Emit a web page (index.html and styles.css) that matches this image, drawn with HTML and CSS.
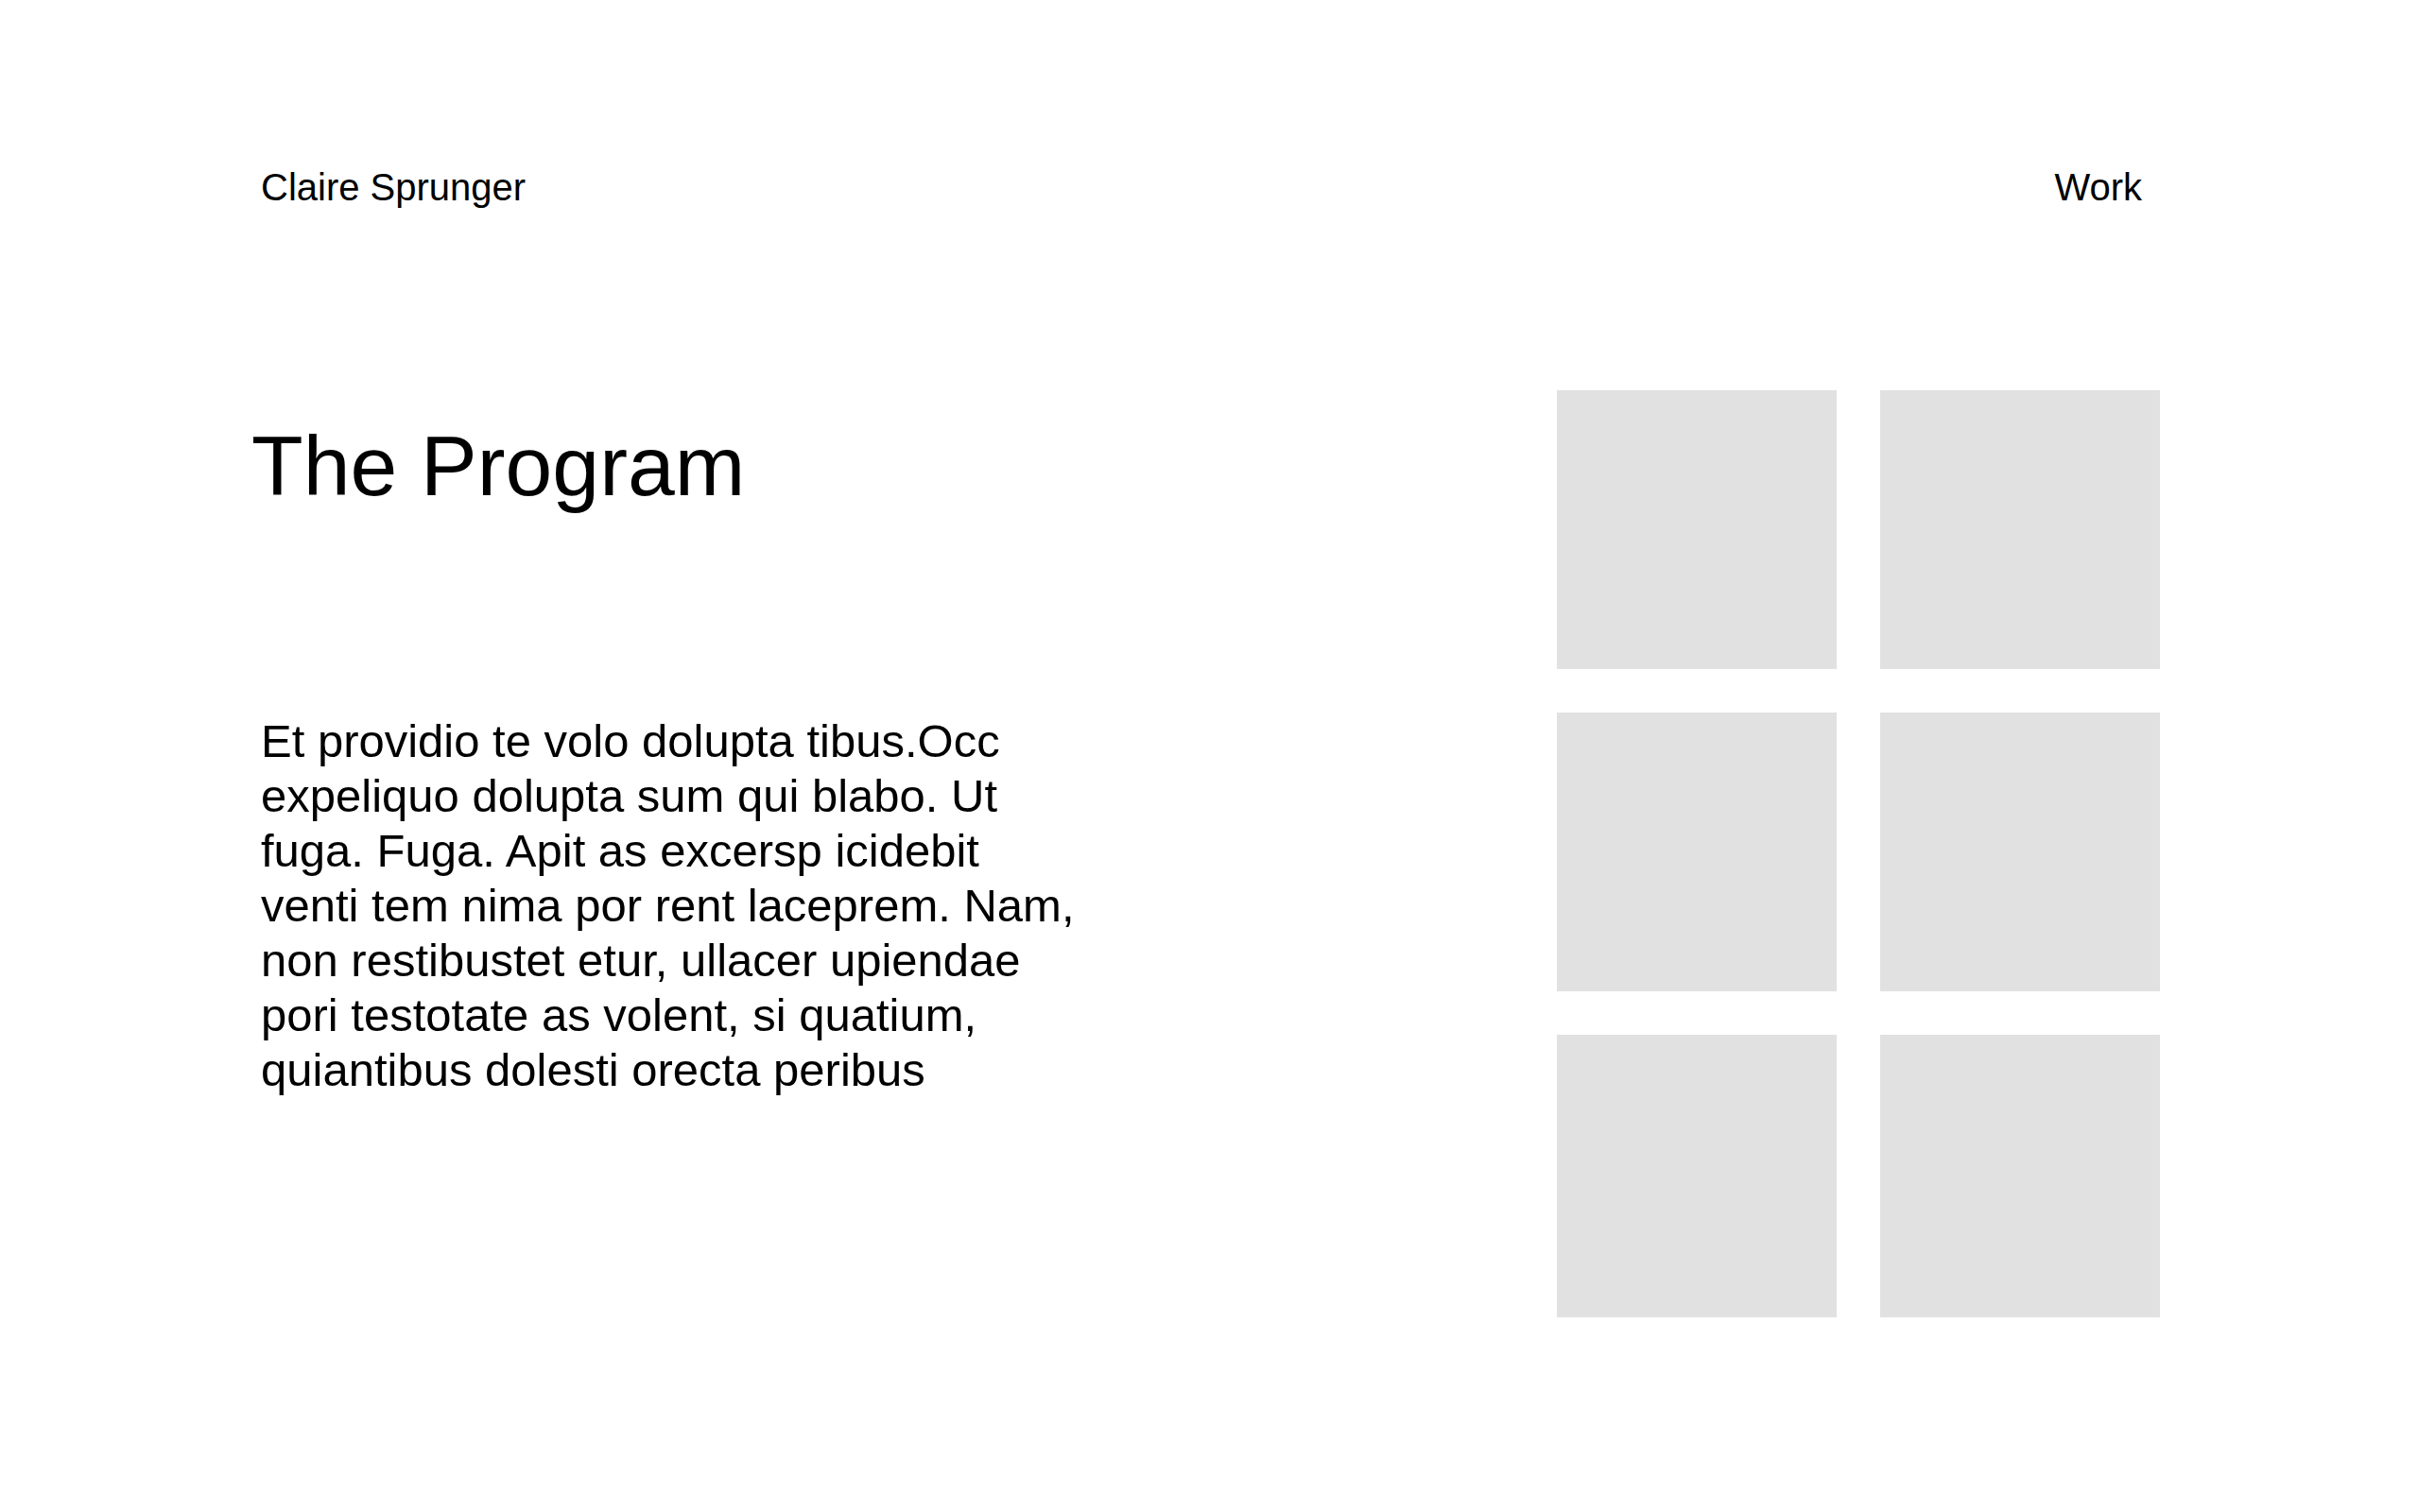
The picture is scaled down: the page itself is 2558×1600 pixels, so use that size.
FILE: index.html
```html
<!DOCTYPE html>
<html lang="en">
<head>
<meta charset="utf-8">
<title>Claire Sprunger — The Program</title>
<link rel="stylesheet" href="styles.css">
</head>
<body>
<div class="page">
  <header class="site-header">
    <a class="brand" href="#">Claire Sprunger</a>
    <nav class="nav"><a href="#">Work</a></nav>
  </header>
  <main class="main">
    <section class="intro">
      <h1 class="title">The Program</h1>
      <p class="body-text">Et providio te volo dolupta tibus.Occ expeliquo dolupta sum qui blabo. Ut fuga. Fuga. Apit as excersp icidebit venti tem nima por rent laceprem. Nam, non restibustet etur, ullacer upiendae pori testotate as volent, si quatium, quiantibus dolesti orecta peribus</p>
    </section>
    <section class="gallery">
      <div class="tile"></div>
      <div class="tile"></div>
      <div class="tile"></div>
      <div class="tile"></div>
      <div class="tile"></div>
      <div class="tile"></div>
    </section>
  </main>
</div>
</body>
</html>
```
FILE: styles.css
```css
html, body {
  margin: 0;
  padding: 0;
  background: #ffffff;
}
body {
  font-family: "Liberation Sans", Arial, Helvetica, sans-serif;
  color: #000;
  height: 1600px;
  overflow: hidden;
}
a {
  color: inherit;
  text-decoration: none;
}
.page {
  padding: 0 273px 0 264px;
}
.site-header {
  display: flex;
  justify-content: space-between;
  align-items: flex-start;
  padding: 175px 19px 0 12px;
  font-size: 40px;
  line-height: 46px;
}
.main {
  display: flex;
  justify-content: space-between;
  align-items: flex-start;
  margin-top: 192px;
}
.intro {
  display: flex;
  flex-direction: column;
}
.title {
  margin: 36px 0 0 2px;
  font-size: 89.5px;
  font-weight: 400;
  line-height: 89px;
}
.body-text {
  margin: 217px 0 0 12px;
  width: 868px;
  font-size: 49px;
  line-height: 58px;
}
.gallery {
  display: grid;
  grid-template-columns: 296px 296px;
  grid-template-rows: 295px 295px 299px;
  gap: 46px;
}
.tile {
  background: #e1e1e1;
}
```
